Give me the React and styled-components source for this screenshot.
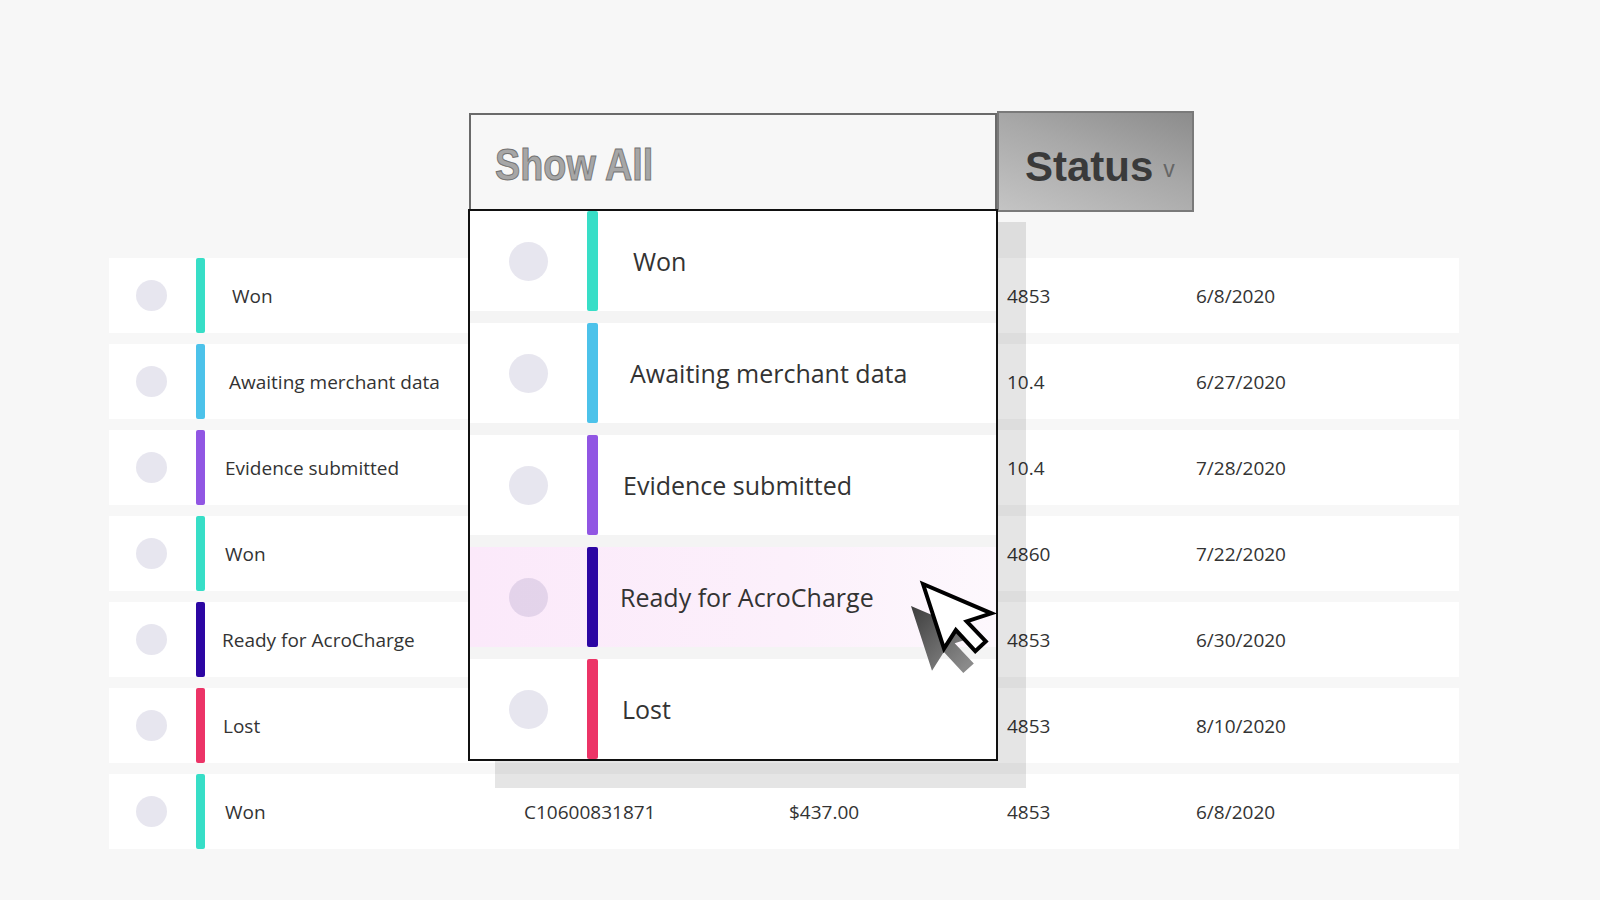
import React from 'react';
import styled, { createGlobalStyle } from 'styled-components';

const GlobalStyle = createGlobalStyle`
    html, body {
        margin: 0;
        padding: 0;
        background: #f7f7f7;
    }
    body {
        font-family: "Open Sans", "Liberation Sans", sans-serif;
        color: #2f2f2f;
    }
`

const Page = styled.div`
    position: relative;
    width: 1600px;
    height: 900px;
    overflow: hidden;
    padding-top: 111px;
    box-sizing: border-box;
`

const FilterBar = styled.div`
    position: relative;
    z-index: 2;
    display: flex;
    align-items: center;
    margin-left: 469px;
    width: 725px;
    height: 101px;
`

const SearchBox = styled.div`
    box-sizing: border-box;
    width: 528px;
    height: 98px;
    display: flex;
    align-items: center;
    padding: 6px 0 0 24px;
    border: 2px solid #6a6a6a;
    background: #f7f7f7;
`

const Placeholder = styled.span`
    display: inline-block;
    transform: scaleX(0.84);
    transform-origin: left center;
    font-family: "Liberation Sans", Arial, sans-serif;
    font-weight: 700;
    font-size: 45px;
    color: #a6a6a6;
    -webkit-text-stroke: 1px #737373;
`

const StatusButton = styled.button`
    box-sizing: border-box;
    width: 197px;
    height: 101px;
    display: flex;
    align-items: center;
    padding: 10px 0 0 26px;
    border: 2px solid #7a7a7a;
    background: linear-gradient(20deg, #c4c4c4 0%, #a8a8a8 55%, #8c8c8c 100%);
    font-family: "Liberation Sans", Arial, sans-serif;
    font-weight: 700;
    font-size: 42px;
    color: #3a3a3a;
    cursor: pointer;
`

const Chevron = styled.span`
    margin: 6px 0 0 10px;
    font-size: 23px;
    font-weight: 400;
    color: #666;
`

const Dropdown = styled.ul`
    position: absolute;
    top: 98px;
    left: -1px;
    box-sizing: border-box;
    width: 530px;
    margin: 0;
    padding: 0;
    list-style: none;
    display: flex;
    flex-direction: column;
    gap: 12px;
    border: 2px solid #111;
    background: #f4f4f4;
    &::before {
        content: '';
        position: absolute;
        left: 25px;
        top: 11px;
        right: -30px;
        bottom: -29px;
        background: rgba(0, 0, 0, 0.1);
        z-index: -1;
    }
`

const Option = styled.li`
    display: flex;
    align-items: center;
    height: 100px;
    padding-left: 39px;
    background: ${props => props.active
        ? 'linear-gradient(90deg, #fbe9fa 0%, #fcf0fb 60%, #fdf8fd 100%)'
        : '#fff'};
`

const Dot = styled.span`
    flex: none;
    width: ${props => props.size}px;
    height: ${props => props.size}px;
    margin-right: ${props => props.gap}px;
    border-radius: 50%;
    background: rgba(70, 60, 130, 0.13);
`

const Bar = styled.span`
    flex: none;
    align-self: stretch;
    width: ${props => props.width}px;
    border-radius: 2px;
    background: ${props => props.color};
`

const OptionLabel = styled.span`
    padding-left: ${props => props.indent}px;
    font-size: 25px;
    color: #333;
`

const Table = styled.div`
    display: flex;
    flex-direction: column;
    gap: 11px;
    width: 1350px;
    margin: 46px 0 0 109px;
`

const Row = styled.div`
    display: flex;
    align-items: center;
    height: 75px;
    padding-left: 27px;
    background: #fff;
    font-size: 19px;
    color: #333;
`

const StatusCell = styled.span`
    box-sizing: border-box;
    width: 319px;
    padding-left: ${props => props.indent}px;
`

const Cell = styled.span`
    width: ${props => props.width}px;
`

const Cursor = styled.svg`
    position: absolute;
    left: 880px;
    top: 560px;
    z-index: 3;
`

const statuses = {
    won: { label: 'Won', color: '#37dec7' },
    awaiting: { label: 'Awaiting merchant data', color: '#4cc2ea' },
    evidence: { label: 'Evidence submitted', color: '#9156e3' },
    ready: { label: 'Ready for AcroCharge', color: '#2c06a3' },
    lost: { label: 'Lost', color: '#ec3467' },
};

const options = [
    { key: 'won', indent: 35 },
    { key: 'awaiting', indent: 32 },
    { key: 'evidence', indent: 25 },
    { key: 'ready', indent: 22, active: true },
    { key: 'lost', indent: 24 },
];

// rows under the open menu only show their last two columns
const rows = [
    { status: 'won', indent: 27, code: '', amount: '', num: '4853', date: '6/8/2020' },
    { status: 'awaiting', indent: 24, code: '', amount: '', num: '10.4', date: '6/27/2020' },
    { status: 'evidence', indent: 20, code: '', amount: '', num: '10.4', date: '7/28/2020' },
    { status: 'won', indent: 20, code: '', amount: '', num: '4860', date: '7/22/2020' },
    { status: 'ready', indent: 17, code: '', amount: '', num: '4853', date: '6/30/2020' },
    { status: 'lost', indent: 18, code: '', amount: '', num: '4853', date: '8/10/2020' },
    { status: 'won', indent: 20, code: 'C10600831871', amount: '$437.00', num: '4853', date: '6/8/2020' },
];

const arrow = 'M0,0 L0,68 L17,54 L29,80 L42,74 L30,49 L56,49 Z';

function App() {
    return (
        <Page>
            <GlobalStyle />
            <FilterBar>
                <SearchBox><Placeholder>Show All</Placeholder></SearchBox>
                <StatusButton>Status<Chevron>v</Chevron></StatusButton>
                <Dropdown>
                    {options.map(opt => (
                        <Option key={opt.key} active={opt.active}>
                            <Dot size={39} gap={39} />
                            <Bar width={11} color={statuses[opt.key].color} />
                            <OptionLabel indent={opt.indent}>{statuses[opt.key].label}</OptionLabel>
                        </Option>
                    ))}
                </Dropdown>
            </FilterBar>
            <Table>
                {rows.map((row, i) => (
                    <Row key={i}>
                        <Dot size={31} gap={29} />
                        <Bar width={9} color={statuses[row.status].color} />
                        <StatusCell indent={row.indent}>{statuses[row.status].label}</StatusCell>
                        <Cell width={265}>{row.code}</Cell>
                        <Cell width={218}>{row.amount}</Cell>
                        <Cell width={189}>{row.num}</Cell>
                        <Cell width={200}>{row.date}</Cell>
                    </Row>
                ))}
            </Table>
            <Cursor width="130" height="130" viewBox="0 0 130 130">
                <defs>
                    <linearGradient id="cursorShade" x1="0" y1="0" x2="0.4" y2="1">
                        <stop offset="0" stopColor="#3d3d3d" />
                        <stop offset="1" stopColor="#8a8a8a" />
                    </linearGradient>
                </defs>
                <path d={arrow} transform="translate(31,46) rotate(-18)" fill="url(#cursorShade)" />
                <path d={arrow} transform="translate(43,24) rotate(-18)" fill="#fff" stroke="#000" strokeWidth="4" />
            </Cursor>
        </Page>
    )
}

export default App
